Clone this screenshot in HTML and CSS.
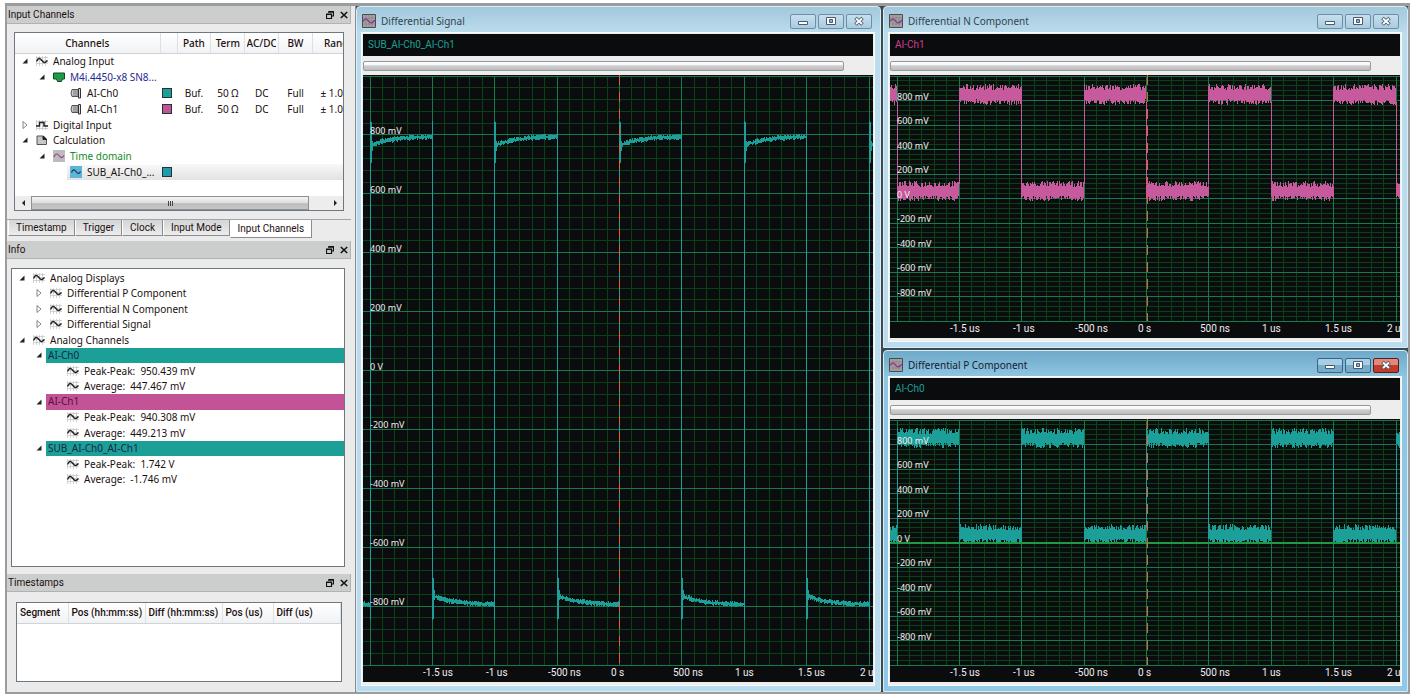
FILE: index.html
```
<!DOCTYPE html>
<html lang="en">

<head>
    <meta charset="UTF-8">
    <meta name="viewport" content="width=device-width, initial-scale=1.0">
    <title>Differential Signal</title>
    <link rel="stylesheet" href="styles.css">
</head>

<body>
    <!-- Shared icons -->
    <svg class="icon-defs" aria-hidden="true">
        <symbol id="icon-float" viewBox="0 0 8 8">
            <path d="M2.5 0.5h5v4.500h-1.500M2 1.200h6M0.500 3h5v4.500h-5zM0 3.500h6" fill="none" stroke="#111" stroke-width="1.2" />
        </symbol>
        <symbol id="icon-close" viewBox="0 0 8 8">
            <path d="M0.800 1l6.400 6M7.200 1l-6.400 6" fill="none" stroke="#111" stroke-width="1.600" />
        </symbol>
        <symbol id="icon-open" viewBox="0 0 6 6">
            <path d="M5.500 0.500v5h-5z" fill="#222" />
        </symbol>
        <symbol id="icon-closed" viewBox="0 0 6 8">
            <path d="M1 0.500l4 3.500l-4 3.500z" fill="#fff" stroke="#777" stroke-width="0.900" />
        </symbol>
        <symbol id="icon-wave" viewBox="0 0 12 12">
            <path d="M0.500 1v10M3.500 1v10M6.500 1v10M9.500 1v10M0 2.500h12M0 5.500h12M0 8.500h12" stroke="#c8c8c8" stroke-width="0.800" />
            <path d="M0.500 6.500C2 3 3.500 2.500 5.500 5S8.500 9 11.500 5.500" fill="none" stroke="#222" stroke-width="1.400" />
        </symbol>
        <symbol id="icon-digital" viewBox="0 0 12 12">
            <path d="M0.500 1v10M3.500 1v10M6.500 1v10M9.500 1v10M0 2.500h12M0 9.500h12" stroke="#c4c4c4" stroke-width="0.800" />
            <path d="M0 7h3.500V3.500h4.500V7h4" fill="none" stroke="#222" stroke-width="1.500" />
        </symbol>
        <symbol id="icon-card" viewBox="0 0 12 12">
            <path d="M0.500 2h11v6H9.500l-1 2.500h-4L3.500 8h-3z" fill="#219a48" stroke="#0d4d25" />
        </symbol>
        <symbol id="icon-plug" viewBox="0 0 12 12">
            <path d="M2 2.500h6v7H2L1 6z" fill="#ccc" stroke="#555" />
            <path d="M4 3v6M6 3v6" stroke="#777" />
            <path d="M8.500 1.500h2v9.500h-2z" fill="#ddd" stroke="#333" />
        </symbol>
        <symbol id="icon-calc" viewBox="0 0 12 12">
            <path d="M1 2h6.500l3 3v5.500H1z" fill="#c6c6c6" stroke="#555" />
            <path d="M7 2v3.500h3.500z" fill="#222" stroke="#222" />
        </symbol>
        <symbol id="icon-domain" viewBox="0 0 12 12">
            <path d="M0 0h12v12H0z" fill="#bcbcbc" />
            <path d="M1 7C2.500 3 4.500 3.500 6 5.500S9 9 11 5.500" fill="none" stroke="#9a3b91" stroke-width="1.200" />
        </symbol>
        <symbol id="icon-sub" viewBox="0 0 12 12">
            <path d="M0 0h12v12H0z" fill="#5fb4d9" />
            <path d="M1.500 6.500C3 3 4.500 3.500 6 5.500S9 8.500 10.500 5.500" fill="none" stroke="#0d3a55" stroke-width="1.200" />
        </symbol>
        <symbol id="icon-scope" viewBox="0 0 14 14">
            <path d="M0.500 0.500h13v13h-13z" fill="#a5a5a5" stroke="#4b4b50" />
            <path d="M4 1v12M7 1v12M10 1v12M1 4h12M1 7h12M1 10h12" stroke="#838383" stroke-width="0.700" />
            <path d="M1 7.500C3 3.500 5 4.500 6.500 7S10 10 13 6" fill="none" stroke="#9a2f93" stroke-width="1.300" />
        </symbol>
        <symbol id="icon-min" viewBox="0 0 12 12">
            <path d="M1.500 6.500h9v3h-9z" fill="#fff" stroke="#4a5a6c" />
        </symbol>
        <symbol id="icon-max" viewBox="0 0 12 12">
            <path d="M1.500 2.500h9v7h-9z" fill="#fff" stroke="#4a5a6c" />
            <path d="M4.500 4.500h3v3h-3z" fill="#8fb0c8" stroke="#4a5a6c" />
        </symbol>
        <symbol id="icon-x" viewBox="0 0 12 12">
            <path d="M2.500 3l7 6.500M9.500 3l-7 6.500" stroke="#4a5a6c" stroke-width="3.600" />
            <path d="M3 3.500l6 5.500M9 3.500l-6 5.500" stroke="#fff" stroke-width="1.800" />
        </symbol>
    </svg>

    <div class="app">
        <!-- Left docks -->
        <aside class="sidebar">
            <section class="dock">
                <header class="dock-title">
                    <h2>Input Channels</h2>
                    <button type="button" aria-label="Float"><svg><use href="#icon-float" /></svg></button>
                    <button type="button" aria-label="Close"><svg><use href="#icon-close" /></svg></button>
                </header>
                <div class="channels-box">
                    <div class="channels-view">
                        <table class="channels">
                            <thead>
                                <tr>
                                    <th class="col-name">Channels</th>
                                    <th class="col-color"></th>
                                    <th>Path</th>
                                    <th>Term</th>
                                    <th><span class="cut">AC/DC</span></th>
                                    <th>BW</th>
                                    <th class="col-range">Range</th>
                                </tr>
                            </thead>
                            <tbody>
                                <tr>
                                    <td><div class="node"><svg class="arrow"><use href="#icon-open" /></svg><svg class="icon"><use href="#icon-wave" /></svg>Analog Input</div></td>
                                    <td colspan="6"></td>
                                </tr>
                                <tr>
                                    <td><div class="node level-1 blue"><svg class="arrow"><use href="#icon-open" /></svg><svg class="icon"><use href="#icon-card" /></svg>M4i.4450-x8 SN8...</div></td>
                                    <td colspan="6"></td>
                                </tr>
                                <tr>
                                    <td><div class="node level-2"><span class="arrow"></span><svg class="icon"><use href="#icon-plug" /></svg>AI-Ch0</div></td>
                                    <td><span class="swatch teal"></span></td>
                                    <td>Buf.</td>
                                    <td>50 Ω</td>
                                    <td>DC</td>
                                    <td>Full</td>
                                    <td class="col-range">± 1.0</td>
                                </tr>
                                <tr>
                                    <td><div class="node level-2"><span class="arrow"></span><svg class="icon"><use href="#icon-plug" /></svg>AI-Ch1</div></td>
                                    <td><span class="swatch pink"></span></td>
                                    <td>Buf.</td>
                                    <td>50 Ω</td>
                                    <td>DC</td>
                                    <td>Full</td>
                                    <td class="col-range">± 1.0</td>
                                </tr>
                                <tr>
                                    <td><div class="node"><svg class="arrow"><use href="#icon-closed" /></svg><svg class="icon"><use href="#icon-digital" /></svg>Digital Input</div></td>
                                    <td colspan="6"></td>
                                </tr>
                                <tr>
                                    <td><div class="node"><svg class="arrow"><use href="#icon-open" /></svg><svg class="icon"><use href="#icon-calc" /></svg>Calculation</div></td>
                                    <td colspan="6"></td>
                                </tr>
                                <tr>
                                    <td><div class="node level-1 green"><svg class="arrow"><use href="#icon-open" /></svg><svg class="icon"><use href="#icon-domain" /></svg>Time domain</div></td>
                                    <td colspan="6"></td>
                                </tr>
                                <tr class="selected">
                                    <td><div class="node"><svg class="icon"><use href="#icon-sub" /></svg>SUB_AI-Ch0_...</div></td>
                                    <td><span class="swatch cyan"></span></td>
                                    <td colspan="5"></td>
                                </tr>
                            </tbody>
                        </table>
                    </div>
                    <div class="scrollbar">
                        <button type="button" class="scroll-left" aria-label="Scroll left"></button>
                        <div class="scroll-thumb"><i></i><i></i><i></i></div>
                        <button type="button" class="scroll-right" aria-label="Scroll right"></button>
                    </div>
                </div>
                <nav class="tabs">
                    <button type="button">Timestamp</button>
                    <button type="button">Trigger</button>
                    <button type="button">Clock</button>
                    <button type="button">Input Mode</button>
                    <button type="button" class="active">Input Channels</button>
                </nav>
            </section>

            <section class="dock dock-info">
                <header class="dock-title">
                    <h2>Info</h2>
                    <button type="button" aria-label="Float"><svg><use href="#icon-float" /></svg></button>
                    <button type="button" aria-label="Close"><svg><use href="#icon-close" /></svg></button>
                </header>
                <div class="info-box">
                    <ul class="info-tree">
                        <li class="node"><svg class="arrow"><use href="#icon-open" /></svg><svg class="icon"><use href="#icon-wave" /></svg>Analog Displays</li>
                        <li class="node level-1"><svg class="arrow"><use href="#icon-closed" /></svg><svg class="icon"><use href="#icon-wave" /></svg>Differential P Component</li>
                        <li class="node level-1"><svg class="arrow"><use href="#icon-closed" /></svg><svg class="icon"><use href="#icon-wave" /></svg>Differential N Component</li>
                        <li class="node level-1"><svg class="arrow"><use href="#icon-closed" /></svg><svg class="icon"><use href="#icon-wave" /></svg>Differential Signal</li>
                        <li class="node"><svg class="arrow"><use href="#icon-open" /></svg><svg class="icon"><use href="#icon-wave" /></svg>Analog Channels</li>
                        <li class="node level-1"><svg class="arrow"><use href="#icon-open" /></svg><span class="band teal">AI-Ch0</span></li>
                        <li class="node level-2"><span class="arrow"></span><svg class="icon"><use href="#icon-wave" /></svg>Peak-Peak: &nbsp;950.439 mV</li>
                        <li class="node level-2"><span class="arrow"></span><svg class="icon"><use href="#icon-wave" /></svg>Average: &nbsp;447.467 mV</li>
                        <li class="node level-1"><svg class="arrow"><use href="#icon-open" /></svg><span class="band pink">AI-Ch1</span></li>
                        <li class="node level-2"><span class="arrow"></span><svg class="icon"><use href="#icon-wave" /></svg>Peak-Peak: &nbsp;940.308 mV</li>
                        <li class="node level-2"><span class="arrow"></span><svg class="icon"><use href="#icon-wave" /></svg>Average: &nbsp;449.213 mV</li>
                        <li class="node level-1"><svg class="arrow"><use href="#icon-open" /></svg><span class="band teal">SUB_AI-Ch0_AI-Ch1</span></li>
                        <li class="node level-2"><span class="arrow"></span><svg class="icon"><use href="#icon-wave" /></svg>Peak-Peak: &nbsp;1.742 V</li>
                        <li class="node level-2"><span class="arrow"></span><svg class="icon"><use href="#icon-wave" /></svg>Average: &nbsp;-1.746 mV</li>
                    </ul>
                </div>
            </section>

            <section class="dock">
                <header class="dock-title">
                    <h2>Timestamps</h2>
                    <button type="button" aria-label="Float"><svg><use href="#icon-float" /></svg></button>
                    <button type="button" aria-label="Close"><svg><use href="#icon-close" /></svg></button>
                </header>
                <div class="stamps-box">
                    <table class="stamps">
                        <thead>
                            <tr>
                                <th class="col-segment">Segment</th>
                                <th class="col-time">Pos (hh:mm:ss)</th>
                                <th class="col-time">Diff (hh:mm:ss)</th>
                                <th class="col-segment">Pos (us)</th>
                                <th>Diff (us)</th>
                            </tr>
                        </thead>
                    </table>
                </div>
            </section>
        </aside>

        <!-- Scope windows -->
        <main class="windows">
            <section class="window window-tall">
                <header class="window-title">
                    <svg><use href="#icon-scope" /></svg>
                    <h1>Differential Signal</h1>
                    <button type="button" aria-label="Minimize"><svg><use href="#icon-min" /></svg></button>
                    <button type="button" aria-label="Maximize"><svg><use href="#icon-max" /></svg></button>
                    <button type="button" aria-label="Close"><svg><use href="#icon-x" /></svg></button>
                </header>
                <div class="window-body">
                    <div class="legend teal-text">SUB_AI-Ch0_AI-Ch1</div>
                    <div class="range"><div class="range-thumb"></div></div>
                    <div class="plot" data-signal="diff"></div>
                </div>
            </section>

            <section class="window">
                <header class="window-title">
                    <svg><use href="#icon-scope" /></svg>
                    <h1>Differential N Component</h1>
                    <button type="button" aria-label="Minimize"><svg><use href="#icon-min" /></svg></button>
                    <button type="button" aria-label="Maximize"><svg><use href="#icon-max" /></svg></button>
                    <button type="button" aria-label="Close"><svg><use href="#icon-x" /></svg></button>
                </header>
                <div class="window-body">
                    <div class="legend pink-text">AI-Ch1</div>
                    <div class="range"><div class="range-thumb"></div></div>
                    <div class="plot" data-signal="n"></div>
                </div>
            </section>

            <section class="window focused">
                <header class="window-title">
                    <svg><use href="#icon-scope" /></svg>
                    <h1>Differential P Component</h1>
                    <button type="button" aria-label="Minimize"><svg><use href="#icon-min" /></svg></button>
                    <button type="button" aria-label="Maximize"><svg><use href="#icon-max" /></svg></button>
                    <button type="button" class="close" aria-label="Close"><svg><use href="#icon-x" /></svg></button>
                </header>
                <div class="window-body">
                    <div class="legend teal-text">AI-Ch0</div>
                    <div class="range"><div class="range-thumb"></div></div>
                    <div class="plot" data-signal="p"></div>
                </div>
            </section>
        </main>
    </div>

    <script src="plots.js"></script>
</body>

</html>
```
FILE: styles.css
```
* {
    box-sizing: border-box;
}

body {
    margin: 0;
    padding: 3px 4px 4px 5px;
    background-color: #fff;
    font-family: "Noto Sans", "Liberation Sans", sans-serif;
    font-size: 10px;
    line-height: 14px;
    color: #1c1010;
}

h1,
h2,
ul {
    margin: 0;
    padding: 0;
    font-size: 10px;
    font-weight: normal;
    list-style: none;
}

button {
    margin: 0;
    padding: 0;
    border: none;
    background: none;
    font: inherit;
    color: inherit;
}

svg {
    display: block;
}

.icon-defs {
    display: none;
}

.app {
    display: flex;
    height: calc(100vh - 7px);
    min-height: 600px;
    border: 2px solid #9b9c9e;
    border-top-width: 3px;
    background-color: #ebebeb;
}

/* Left docks */
.sidebar {
    flex: none;
    display: flex;
    flex-direction: column;
    gap: 4px;
    width: 349px;
    padding-right: 4px;
    border-right: 1px solid #8b8d90;
}

.dock {
    display: flex;
    flex-direction: column;
}

.dock-info {
    flex: 1;
    min-height: 0;
}

.dock-title {
    display: flex;
    align-items: center;
    gap: 6px;
    height: 18px;
    padding: 0 2px 0 1px;
    border-bottom: 1px solid #b0b1b2;
    border-right: 1px solid #b0b1b2;
    background-color: #cccdcd;
}

.dock-title h2 {
    flex: 1;
    font-family: Roboto, "Liberation Sans", sans-serif;
}

.dock-title svg {
    width: 8px;
    height: 8px;
}

.channels-box,
.info-box,
.stamps-box {
    border: 1px solid #6d7883;
    background-color: #fff;
    overflow: hidden;
}

.channels-box {
    height: 179px;
    margin: 8px 7px 0;
    display: flex;
    flex-direction: column;
}

.channels-view {
    flex: 1;
    overflow: hidden;
}

.channels {
    width: 340px;
    height: 147px;
    table-layout: fixed;
    border-collapse: collapse;
}

.channels th,
.stamps th {
    height: 20px;
    padding: 0;
    border-right: 1px solid #dde0e4;
    border-bottom: 1px solid #d0d3d7;
    background: linear-gradient(#fff, #f1f2f4);
    font-weight: 500;
    white-space: nowrap;
}

.channels td {
    padding: 0;
    text-align: center;
    white-space: nowrap;
    line-height: 12px;
}

.channels .col-name {
    width: 145px;
}

.channels .col-color {
    width: 17px;
}

.channels .col-range {
    padding-left: 8px;
    text-align: left;
}

.channels th.col-range {
    width: 42px;
    padding-left: 11px;
}

.cut {
    display: flex;
    justify-content: center;
    overflow: hidden;
    margin: 0 2px;
}

.node {
    display: flex;
    align-items: center;
    gap: 5px;
    padding-left: 7px;
    white-space: nowrap;
}

.channels .node {
    height: 15px;
}

.node.level-1 {
    padding-left: 24px;
}

.node.level-2 {
    padding-left: 41px;
}

/* Highlight starts at the icon of the selected channel */
.selected td,
.selected .node {
    background: linear-gradient(#f8f8f8, #e2e2e2);
}

.selected td:first-child {
    background: none;
}

.selected .node {
    margin-left: 52px;
    padding-left: 3px;
}

.arrow {
    flex: none;
    width: 6px;
    height: 8px;
    margin-right: 3px;
}

.icon {
    flex: none;
    width: 12px;
    height: 12px;
}

.blue {
    color: #1f2a94;
}

.green {
    color: #148a2a;
}

.swatch {
    display: block;
    width: 10px;
    height: 10px;
    margin: 0 2px;
    border: 1px solid #23333a;
}

.teal {
    background-color: #1c9f96;
}

.pink {
    background-color: #c25397;
}

.cyan {
    background-color: #1f9bab;
}

.scrollbar {
    display: flex;
    height: 14px;
    background-color: #ededed;
}

.scrollbar button {
    display: flex;
    align-items: center;
    justify-content: center;
    width: 16px;
}

.scroll-left::before,
.scroll-right::before {
    content: "";
    border: 3px solid transparent;
}

.scroll-left::before {
    border-left: none;
    border-right-color: #222;
}

.scroll-right::before {
    border-right: none;
    border-left-color: #222;
}

.scroll-thumb {
    flex: 1;
    display: flex;
    align-items: center;
    justify-content: center;
    gap: 1px;
    margin-right: 18px;
    border: 1px solid #8e9094;
    background: linear-gradient(#f4f4f4 0%, #dedede 50%, #bcbdbf 55%, #c4c5c7 100%);
}

.scroll-thumb i {
    width: 1px;
    height: 5px;
    background-color: #444;
}

.tabs {
    display: flex;
    align-items: flex-start;
    height: 18px;
    margin-top: 8px;
    padding-left: 1px;
    border-top: 1px solid #a2a3a5;
}

.tabs button {
    height: 16px;
    padding: 0 7px;
    border: 1px solid #8a8c90;
    border-top: none;
    border-left-color: #fff;
    background: linear-gradient(#d4d5d6, #ececec);
    font-family: Roboto, "Liberation Sans", sans-serif;
    white-space: nowrap;
}

.tabs .active {
    height: 18px;
    background: #fff;
}

.info-box {
    flex: 1;
    margin: 9px 6px 3px 4px;
}

.info-tree {
    display: grid;
    grid-auto-rows: 1fr;
    height: 218px;
    padding-top: 1px;
}

.band {
    flex: 1;
    align-self: stretch;
    margin-left: -4px;
    padding-left: 2px;
    color: #14284a;
}

.band.pink {
    color: #5a0f3c;
}

.stamps-box {
    height: 80px;
    margin: 10px 9px;
}

.stamps {
    width: 100%;
    table-layout: fixed;
    border-collapse: collapse;
}

.stamps th {
    padding-left: 3px;
    font-family: Roboto, "Liberation Sans", sans-serif;
    text-align: left;
}

.stamps .col-segment {
    width: 51px;
}

.stamps .col-time {
    width: 77px;
}

/* Scope windows */
.windows {
    flex: 1;
    display: grid;
    grid-template-columns: 1fr 1fr;
    grid-template-rows: 1fr 1fr;
    gap: 2px;
    min-width: 0;
    background-color: #3c4a52;
}

.window {
    display: flex;
    flex-direction: column;
    min-width: 0;
    min-height: 0;
    padding: 0 5px 5px 4px;
    border: 1px solid #d9edf7;
    border-radius: 4px 4px 0 0;
    background: linear-gradient(#a3c8dc, #bbdcec 26px, #bbdcee);
}

.window-tall {
    grid-row: span 2;
}

.focused {
    background: linear-gradient(#6fa9c9, #8ec5e2 26px, #90c9e8);
}

.window-title {
    display: flex;
    align-items: center;
    gap: 2px;
    height: 25px;
    padding: 3px 3px 0 1px;
    color: #33434e;
}

.window-title > svg {
    width: 14px;
    height: 14px;
}

.window-title h1 {
    flex: 1;
    padding-left: 3px;
}

.focused h1 {
    color: #14222c;
}

.window-title button {
    display: flex;
    align-items: center;
    justify-content: center;
    width: 26px;
    height: 15px;
    border: 1px solid #6f8ea6;
    border-radius: 2px;
    background: linear-gradient(#c6dfee, #a9cbdf);
}

.window-title button svg {
    width: 12px;
    height: 12px;
}

.focused .window-title button {
    border-color: #3f637c;
    background: linear-gradient(#a5cfe6 45%, #74acca 50%);
}

.focused .window-title .close {
    border-color: #5a1c18;
    background: linear-gradient(#e08a7c 45%, #c23c28 50%);
}

.window-body {
    flex: 1;
    display: flex;
    flex-direction: column;
    min-height: 0;
    padding: 1px 1px 3px;
    border: 1px solid #f8fbfc;
    background-color: #ededed;
}

.legend {
    height: 22px;
    padding: 4px 5px;
    background-color: #0b0c0e;
    font-family: Roboto, "Liberation Sans", sans-serif;
}

.teal-text {
    color: #1aa198;
}

.pink-text {
    color: #d03a96;
}

.range {
    height: 19px;
    padding: 5px 29px 0 0;
}

.range-thumb {
    height: 10px;
    border: 1px solid #97989a;
    border-radius: 2px;
    background: linear-gradient(#fafafa 30%, #cdcdcf 50%, #bdbec0);
}

.plot {
    flex: 1;
    min-height: 0;
    background-color: #0b0c0e;
    overflow: hidden;
}

.plot text {
    font-size: 9px;
    fill: #f2ecee;
}

.plot .time {
    font-family: Roboto, "Liberation Sans", sans-serif;
    font-size: 10px;
}

.plot path {
    fill: none;
    shape-rendering: crispEdges;
}

.plot .minor {
    stroke: #0b4119;
}

.plot .major {
    stroke: #177a4e;
}

.plot .zero {
    stroke: #1f9a45;
}

.plot .cursor {
    stroke: #e2603c;
    stroke-dasharray: 10 7;
}

.plot .trace-teal {
    stroke: #1c9f98;
}

.plot .trace-pink {
    stroke: #c65a9c;
}
```
FILE: plots.js
```
// Margins between the plot edge and the -2 us .. 2 us / +-1000 mV area
const LEFT = 7;
const RIGHT = 4;
const TOP = 1;
const BOTTOM = 17;

const signals = {
    diff: { trace: 'teal', cursor: 0 },
    n: { trace: 'pink', highFirst: false, high: [790, 905], low: [5, 115], cursor: 1 },
    p: { trace: 'teal', highFirst: true, high: [795, 905], low: [10, 120], cursor: 1, zeroLine: true }
};

let seed = 7;

function noise() {
    seed = (seed * 16807) % 2147483647;
    return seed / 2147483647;
}

function drawPlot(plot) {
    const signal = signals[plot.dataset.signal];
    const width = plot.clientWidth;
    const height = plot.clientHeight;
    const xOf = us => LEFT + (us + 2) / 4 * (width - LEFT - RIGHT);
    const yOf = mv => TOP + (1000 - mv) / 2000 * (height - TOP - BOTTOM);
    const snap = v => Math.floor(v) + 0.5;
    const bottom = yOf(-1000);
    let minor = '';
    let major = '';
    let labels = '';
    let trace = '';
    let edges = '';

    // Grid
    for (let i = 0; i <= 40; i++) {
        const x = snap(xOf(-2 + i / 10));
        const line = `M${x} ${TOP}V${bottom}`;
        if (i % 5 === 0) major += line; else minor += line;
    }
    for (let i = 0; i <= 50; i++) {
        const y = snap(yOf(1000 - i * 40));
        const line = `M0 ${y}H${width}`;
        if (i % 5 === 0) major += line; else minor += line;
    }

    // Axis labels
    for (let mv = 800; mv >= -800; mv -= 200) {
        labels += `<text x="${LEFT}" y="${Math.round(yOf(mv)) - 1}">${mv === 0 ? '0 V' : mv + ' mV'}</text>`;
    }
    const times = ['-1.5 us', '-1 us', '-500 ns', '0 s', '500 ns', '1 us', '1.5 us', '2 us'];
    times.forEach((label, i) => {
        labels += `<text class="time" x="${Math.round(xOf(-1.5 + i / 2)) - 9}" y="${height - 6}">${label}</text>`;
    });

    // Half periods of 500 ns, one extra on each side of the grid
    for (let k = -1; k <= 8; k++) {
        const start = xOf(-2 + k / 2);
        const end = xOf(-1.5 + k / 2);
        if (signal.high) {
            const isHigh = (Math.abs(k) % 2 === 0) === signal.highFirst;
            const band = isHigh ? signal.high : signal.low;
            for (let x = snap(start); x < end; x++) {
                const top = yOf(band[1] + noise() * 50 - 20);
                const low = yOf(band[0] - noise() * 45 + 20);
                trace += `M${x} ${top.toFixed(1)}V${low.toFixed(1)}`;
            }
            if (k >= 0) edges += `M${snap(start)} ${yOf(signal.high[0])}V${yOf(signal.low[1])}`;
        } else {
            const sign = Math.abs(k) % 2 === 0 ? 1 : -1;
            for (let x = snap(start) + 1; x < end; x++) {
                const level = 800 - 32 * Math.exp((start - x) / 22);
                const y = yOf(sign * (level - 4));
                trace += `M${x} ${(y - 1 - noise() * 2).toFixed(1)}V${(y + 1 + noise() * 2).toFixed(1)}`;
            }
            if (k >= 0) {
                const x = snap(start);
                edges += `M${x} ${yOf(848)}V${yOf(-848)}`;
                trace += `M${x + 1} ${yOf(sign * 705)}V${yOf(sign * 845)}`;
                trace += `M${x + 2} ${yOf(sign * 745)}V${yOf(sign * 780)}`;
            }
        }
    }

    const zero = signal.zeroLine ? `<path class="zero" stroke-width="2" d="M0 ${Math.round(yOf(0))}H${width}"/>` : '';
    const cursorX = snap(xOf(0)) + signal.cursor;
    plot.innerHTML = `<svg width="${width}" height="${height}">
        <path class="minor" d="${minor}"/>
        <path class="major" d="${major}"/>
        <path class="trace-${signal.trace}" d="${trace}"/>
        <path class="trace-${signal.trace}" d="${edges}"/>
        ${zero}
        <path class="cursor" d="M${cursorX} 0V${bottom}"/>
        ${labels}
    </svg>`;
}

function drawAll() {
    const plots = document.querySelectorAll('.plot');
    plots.forEach(plot => plot.innerHTML = '');
    plots.forEach(drawPlot);
}

window.addEventListener('resize', drawAll);
drawAll();
```
